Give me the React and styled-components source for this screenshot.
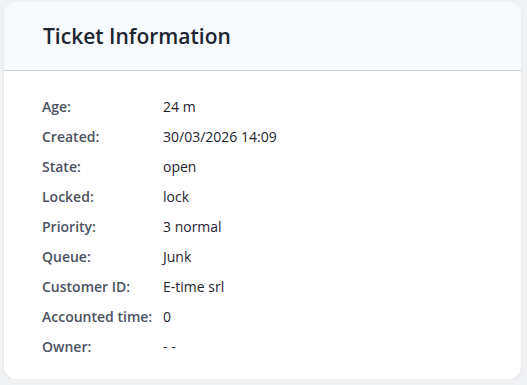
import styled, { createGlobalStyle } from "styled-components";

const GlobalStyle = createGlobalStyle`
  html, body {
    margin: 0;
    background: #f1f2f4;
  }
  body {
    font-family: "Open Sans", "Noto Sans", sans-serif;
  }
`;

const rows = [
  ["Age:", "24 m"],
  ["Created:", "30/03/2026 14:09"],
  ["State:", "open"],
  ["Locked:", "lock"],
  ["Priority:", "3 normal"],
  ["Queue:", "Junk"],
  ["Customer ID:", "E-time srl"],
  ["Accounted time:", "0"],
  ["Owner:", "- -"],
];

const App = () => {
  return (
    <>
      <GlobalStyle />
      <Page>
        <Card>
          <Header>
            <h2>Ticket Information</h2>
          </Header>
          <Details>
            {rows.map(([label, value]) => (
              <Row key={label}>
                <Label>{label}</Label>
                <Value>{value}</Value>
              </Row>
            ))}
          </Details>
        </Card>
      </Page>
    </>
  );
};

const Page = styled.main`
  padding: 2px 6px 0 4px;
`;

const Card = styled.section`
  background: #fff;
  border-radius: 12px;
  overflow: hidden;
  box-shadow: 0 1px 3px rgba(30, 40, 60, 0.08);
`;

const Header = styled.header`
  height: 68px;
  display: flex;
  align-items: center;
  padding: 0 39px;
  background: #f7faff;
  border-bottom: 1px solid #c9cfdb;
  h2 {
    margin: 0;
    font-size: 21px;
    font-weight: 600;
    color: #1d2433;
  }
`;

const Details = styled.div`
  padding: 20px 38px 18px;
`;

const Row = styled.div`
  display: grid;
  grid-template-columns: 121px 1fr;
  height: 30px;
  align-items: center;
  font-size: 14px;
`;

const Label = styled.span`
  font-weight: 600;
  color: #4b5262;
`;

const Value = styled.span`
  color: #1f2430;
`;

export default App;
